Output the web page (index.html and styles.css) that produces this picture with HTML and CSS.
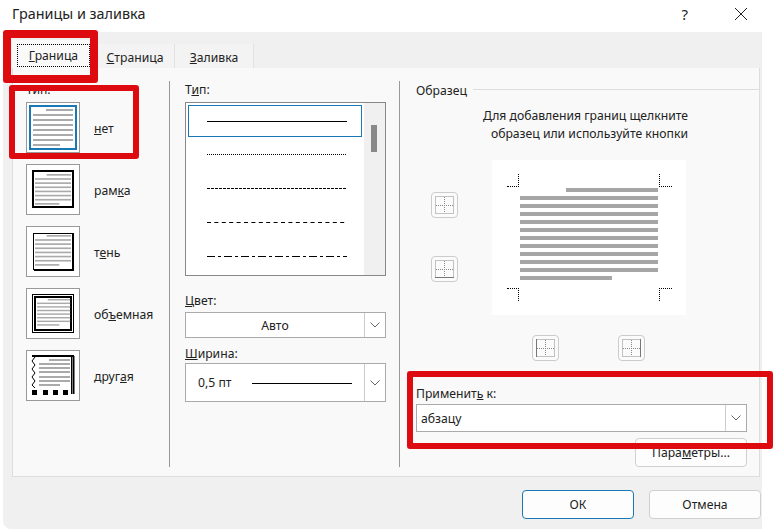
FILE: index.html
```html
<!DOCTYPE html>
<html lang="ru">
<head>
    <meta charset="UTF-8">
    <title>Границы и заливка</title>
    <link rel="stylesheet" href="styles.css">
</head>
<body>
<svg class="defs" width="0" height="0">
    <defs>
        <g id="txt" fill="#aaa">
            <rect x="13" y="0" width="27" height="2"/>
            <rect x="0" y="5" width="40" height="2"/>
            <rect x="0" y="10" width="40" height="2"/>
            <rect x="0" y="15" width="40" height="2"/>
            <rect x="0" y="20" width="40" height="2"/>
            <rect x="0" y="25" width="40" height="2"/>
            <rect x="0" y="30" width="40" height="2"/>
            <rect x="0" y="35" width="27" height="2"/>
        </g>
        <g id="cell" fill="none" stroke="#888" stroke-dasharray="1 1">
            <rect x="3.5" y="3.5" width="18" height="17"/>
            <path d="M12.5 4v16M4 12.5h17"/>
        </g>
    </defs>
</svg>

<div class="dialog">
    <header class="title-bar">
        <span class="title">Границы и заливка</span>
        <span class="help">?</span>
        <svg class="close" width="12" height="12" viewBox="0 0 12 12"><path d="M0 0l12 12M12 0L0 12" stroke="#222" fill="none"/></svg>
    </header>

    <div class="tabs-frame">
        <div class="tabs">
            <div class="tab active"><span class="focus"><u>Г</u>раница</span></div>
            <div class="tab"><span><u>С</u>траница</span></div>
            <div class="tab"><span><u>З</u>аливка</span></div>
        </div>

        <div class="panel">
            <section class="col-setting">
                <div class="label">Тип:</div>
                <div class="setting">
                    <div class="tile">
                        <svg width="52" height="49" viewBox="0 0 52 49">
                            <rect x="3" y="3" width="46" height="43" fill="#fff" stroke="#1a78b4" stroke-width="2"/>
                            <use href="#txt" x="6" y="6"/>
                        </svg>
                    </div>
                    <span><u>н</u>ет</span>
                </div>
                <div class="setting">
                    <div class="tile">
                        <svg width="52" height="49" viewBox="0 0 52 49">
                            <rect x="6" y="6" width="40" height="36" fill="#fff" stroke="#000" stroke-width="2"/>
                            <use href="#txt" transform="translate(8 9) scale(.9 .83)"/>
                        </svg>
                    </div>
                    <span>рам<u>к</u>а</span>
                </div>
                <div class="setting">
                    <div class="tile">
                        <svg width="52" height="49" viewBox="0 0 52 49">
                            <rect x="6.5" y="6.5" width="39" height="36" fill="#fff" stroke="#000"/>
                            <path d="M46 6v37H7" fill="none" stroke="#000" stroke-width="2"/>
                            <use href="#txt" transform="translate(8 8) scale(.9 .83)"/>
                        </svg>
                    </div>
                    <span>т<u>е</u>нь</span>
                </div>
                <div class="setting">
                    <div class="tile">
                        <svg width="52" height="49" viewBox="0 0 52 49">
                            <rect x="5.5" y="5.5" width="41" height="38" fill="#fff" stroke="#000"/>
                            <rect x="8" y="8" width="36" height="33" fill="#fff" stroke="#000" stroke-width="2"/>
                            <use href="#txt" transform="translate(10 10) scale(.83 .72)"/>
                        </svg>
                    </div>
                    <span>об<u>ъ</u>емная</span>
                </div>
                <div class="setting">
                    <div class="tile">
                        <svg width="52" height="49" viewBox="0 0 52 49">
                            <path d="M5 5h42" stroke="#000" stroke-width="2" fill="none"/>
                            <path d="M44.5 5v38" stroke="#000" fill="none"/>
                            <path d="M46.5 5v38" stroke="#000" stroke-width="2" fill="none"/>
                            <path d="M8 6L5 10l3 4-3 4 3 4-3 4 3 4-3 4 3 3" stroke="#000" fill="none"/>
                            <g fill="#aaa">
                                <rect x="22" y="8" width="21" height="2"/>
                                <rect x="12" y="12" width="31" height="2"/>
                                <rect x="12" y="16" width="31" height="2"/>
                                <rect x="12" y="20" width="31" height="2"/>
                                <rect x="12" y="25" width="31" height="2"/>
                                <rect x="12" y="29" width="31" height="2"/>
                                <rect x="12" y="33" width="21" height="2"/>
                            </g>
                            <g fill="#000">
                                <rect x="5" y="39" width="5" height="5"/>
                                <rect x="16" y="39" width="5" height="5"/>
                                <rect x="26" y="39" width="5" height="5"/>
                                <rect x="36" y="39" width="5" height="5"/>
                            </g>
                        </svg>
                    </div>
                    <span>друг<u>а</u>я</span>
                </div>
            </section>

            <section class="col-style">
                <div class="label">Т<u>и</u>п:</div>
                <div class="listbox">
                    <div class="list-items">
                        <div class="line-item selected"><svg width="140" height="2"><path d="M0 1.5h140" stroke="#000"/></svg></div>
                        <div class="line-item"><svg width="140" height="2"><path d="M0 1.5h140" stroke="#000" stroke-dasharray="1 1"/></svg></div>
                        <div class="line-item"><svg width="140" height="2"><path d="M0 1.5h140" stroke="#000" stroke-dasharray="3 1"/></svg></div>
                        <div class="line-item"><svg width="140" height="2"><path d="M0 1.5h140" stroke="#000" stroke-dasharray="4 3.4"/></svg></div>
                        <div class="line-item"><svg width="140" height="2"><path d="M0 1.5h140" stroke="#000" stroke-dasharray="8 3 3 3"/></svg></div>
                    </div>
                    <div class="scroll"><div class="thumb"></div></div>
                </div>

                <div class="label color-label"><u>Ц</u>вет:</div>
                <div class="combo combo-color">
                    <div class="combo-value center">Авто</div>
                    <div class="combo-arrow"><svg width="10" height="6" viewBox="0 0 10 6"><path d="M.5.5L5 5 9.5.5" fill="none" stroke="#666"/></svg></div>
                </div>

                <div class="label width-label"><u>Ш</u>ирина:</div>
                <div class="combo combo-width">
                    <div class="combo-value width-value">
                        <span>0,5 пт</span>
                        <svg width="100" height="2"><path d="M0 1.5h100" stroke="#000"/></svg>
                    </div>
                    <div class="combo-arrow"><svg width="10" height="6" viewBox="0 0 10 6"><path d="M.5.5L5 5 9.5.5" fill="none" stroke="#666"/></svg></div>
                </div>
            </section>

            <section class="col-sample">
                <div class="sample-head"><span>Образец</span><i></i></div>
                <p class="hint">Для добавления границ щелкните<br>образец или используйте кнопки</p>

                <div class="sample-grid">
                    <div class="side-buttons">
                        <div class="cell-btn"><svg width="25" height="24"><use href="#cell"/></svg></div>
                        <div class="cell-btn"><svg width="25" height="24"><use href="#cell"/><path d="M3 20.5h19" stroke="#777"/></svg></div>
                    </div>
                    <div class="preview">
                        <i class="corner tl"></i><i class="corner tr"></i>
                        <i class="corner bl"></i><i class="corner br"></i>
                        <div class="preview-lines">
                            <b class="short-first"></b><b></b><b></b><b></b><b></b><b></b>
                            <b></b><b></b><b></b><b></b><b></b><b class="short-last"></b>
                        </div>
                    </div>
                </div>

                <div class="bottom-buttons">
                    <div class="cell-btn"><svg width="25" height="24"><use href="#cell"/><path d="M3.5 3v18" stroke="#777"/></svg></div>
                    <div class="cell-btn"><svg width="25" height="24"><use href="#cell"/><path d="M21.5 3v18" stroke="#777"/></svg></div>
                </div>

                <div class="label apply-label">Применит<u>ь</u> к:</div>
                <div class="combo combo-apply">
                    <div class="combo-value">абзацу</div>
                    <div class="combo-arrow"><svg width="10" height="6" viewBox="0 0 10 6"><path d="M.5.5L5 5 9.5.5" fill="none" stroke="#666"/></svg></div>
                </div>

                <div class="options-row"><button class="btn options">Пара<u>м</u>етры...</button></div>
            </section>
        </div>

        <footer class="actions">
            <button class="btn ok">ОК</button>
            <button class="btn">Отмена</button>
        </footer>
    </div>

    <!-- red marks drawn on top of the screenshot -->
    <div class="mark mark-tab"></div>
    <div class="mark mark-none"></div>
    <div class="mark mark-apply"></div>
</div>
</body>
</html>
```

FILE: styles.css
```css
* {
    box-sizing: border-box;
}

body {
    margin: 0;
    background-color: #fff;
    font-family: 'Noto Sans', 'Open Sans', sans-serif;
    font-size: 12.2px;
    color: #222;
}

.defs {
    position: absolute;
}

.dialog {
    position: relative;
    width: 778px;
    height: 529px;
    overflow: hidden;
}

.title-bar {
    display: flex;
    align-items: center;
    height: 32px;
    padding: 0 31px 5px 12px;
}

.title {
    flex: 1;
    font-size: 14.4px;
}

.help {
    font-size: 15px;
    margin-right: 47px;
}

/* Tabs and panel */
.tabs-frame {
    margin-left: 3px;
    width: 759px;
    height: 497px;
    padding-left: 9px;
    background-color: #f0f0f0;
    border-bottom-left-radius: 8px;
}

.tabs {
    display: flex;
    align-items: flex-end;
    height: 36px;
}

.tab {
    display: flex;
    align-items: center;
    justify-content: center;
    width: 79px;
    height: 24px;
    padding-top: 2px;
    background-color: #f3f3f3;
    border-right: 1px solid #e2e2e2;
}

.tab.active {
    width: 84px;
    height: 28px;
    padding-top: 3px;
    background-color: #f9f9f9;
}

.focus {
    padding: 2px 11px;
    border: 1px dotted #000;
}

.panel {
    display: flex;
    width: 748px;
    height: 409px;
    padding-top: 13px;
    background-color: #f9f9f9;
    border-left: 1px solid #ddd;
    border-right: 1px solid #ddd;
    border-bottom: 1px solid #ddd;
}

.label {
    line-height: 18px;
    height: 16px;
}

/* Setting column */
.col-setting {
    width: 157px;
    height: 386px;
    padding: 0 0 0 13px;
    border-right: 1px solid #999;
}

.setting {
    display: flex;
    align-items: center;
    gap: 14px;
    height: 51px;
    margin-bottom: 11px;
}

.setting span {
    padding-top: 2px;
}

.col-setting .label {
    height: 21px;
}

.tile {
    width: 54px;
    height: 51px;
    background-color: #fff;
    border: 1px solid #999;
}

.tile svg {
    display: block;
}

/* Style column */
.col-style {
    width: 230px;
    height: 386px;
    padding: 0 14px 0 15px;
    border-right: 1px solid #999;
}

.col-style > .label:first-child {
    height: 21px;
}

.listbox {
    display: flex;
    width: 201px;
    height: 174px;
    background-color: #fff;
    border: 1px solid #888;
}

.list-items {
    flex: 1;
    padding: 2px 2px 0;
}

.line-item {
    display: flex;
    align-items: center;
    height: 34px;
    padding-left: 19px;
}

.line-item svg {
    display: block;
}

.line-item.selected {
    height: 32px;
    border: 1px solid #1a78b4;
    padding-left: 18px;
}

.scroll {
    width: 21px;
    padding: 22px 0 0 7px;
    background-color: #f0f0f0;
}

.thumb {
    width: 6px;
    height: 27px;
    background-color: #888;
}

.color-label {
    margin-top: 17px;
    height: 19px;
    line-height: 16px;
}

.width-label {
    margin-top: 6px;
    height: 19px;
    line-height: 20px;
}

.combo {
    display: flex;
    width: 201px;
    background-color: #fff;
    border: 1px solid #aaa;
}

.combo-color {
    height: 26px;
}

.combo-width {
    height: 39px;
}

.combo-value {
    flex: 1;
    display: flex;
    align-items: center;
    padding-left: 12px;
}

.combo-value.center {
    justify-content: center;
    padding-left: 0;
}

.width-value {
    gap: 21px;
}

.width-value svg {
    display: block;
}

.combo-arrow {
    display: flex;
    align-items: center;
    justify-content: center;
    width: 21px;
    border-left: 1px solid #ccc;
}

/* Sample column */
.col-sample {
    flex: 1;
    padding-left: 16px;
}

.sample-head {
    display: flex;
    align-items: center;
    gap: 6px;
    height: 16px;
}

.sample-head span {
    padding-top: 2px;
}

.sample-head i {
    flex: 1;
    height: 1px;
    background-color: #ddd;
}

.hint {
    margin: 10px 0 0;
    width: 272px;
    line-height: 18px;
    text-align: right;
}

.sample-grid {
    display: flex;
    margin-top: 17px;
    margin-left: 15px;
    gap: 34px;
}

.side-buttons {
    display: flex;
    flex-direction: column;
    gap: 38px;
    padding-top: 32px;
}

.cell-btn {
    width: 27px;
    height: 26px;
    background-color: #fbfbfb;
    border: 1px solid #ccc;
    border-radius: 4px;
}

.cell-btn svg {
    display: block;
}

.preview {
    position: relative;
    width: 194px;
    height: 155px;
    padding: 28px 28px 0;
    background-color: #fff;
}

.preview-lines {
    display: flex;
    flex-direction: column;
    gap: 4px;
}

.preview-lines b {
    display: block;
    height: 4px;
    background-color: #a6a6a6;
}

.preview-lines .short-first {
    margin-left: 46px;
}

.preview-lines .short-last {
    width: 92px;
}

.corner {
    position: absolute;
    height: 13px;
    border: 0 dotted #000;
}

.corner.tl {
    left: 15px;
    top: 14px;
    width: 12px;
    border-right-width: 1px;
    border-bottom-width: 1px;
}

.corner.tr {
    left: 167px;
    top: 14px;
    width: 13px;
    border-left-width: 1px;
    border-bottom-width: 1px;
}

.corner.bl {
    left: 15px;
    top: 128px;
    width: 12px;
    border-right-width: 1px;
    border-top-width: 1px;
}

.corner.br {
    left: 167px;
    top: 128px;
    width: 13px;
    border-left-width: 1px;
    border-top-width: 1px;
}

.bottom-buttons {
    display: flex;
    gap: 59px;
    margin: 20px 0 0 116px;
}

.apply-label {
    margin-top: 24px;
    height: 19px;
}

.combo-apply {
    width: 331px;
    height: 28px;
}

.combo-apply .combo-value {
    padding-left: 4px;
}

.options-row {
    display: flex;
    justify-content: flex-end;
    width: 331px;
    margin-top: 6px;
}

/* Buttons */
.btn {
    width: 112px;
    height: 29px;
    padding: 0;
    font: inherit;
    color: inherit;
    background-color: #fdfdfd;
    border: 1px solid #d0d0d0;
    border-radius: 4px;
}

.btn.ok {
    border-color: #1a78b4;
}

.actions {
    display: flex;
    justify-content: flex-end;
    gap: 15px;
    padding: 13px 1px 0 0;
}

/* Annotations */
.mark {
    position: absolute;
    border: 6px solid #dd0a0f;
    border-radius: 3px;
}

.mark-tab {
    left: 3px;
    top: 30px;
    width: 95px;
    height: 53px;
    border-width: 8px;
}

.mark-none {
    left: 9px;
    top: 85px;
    width: 130px;
    height: 74px;
}

.mark-apply {
    left: 407px;
    top: 371px;
    width: 366px;
    height: 78px;
}
```
